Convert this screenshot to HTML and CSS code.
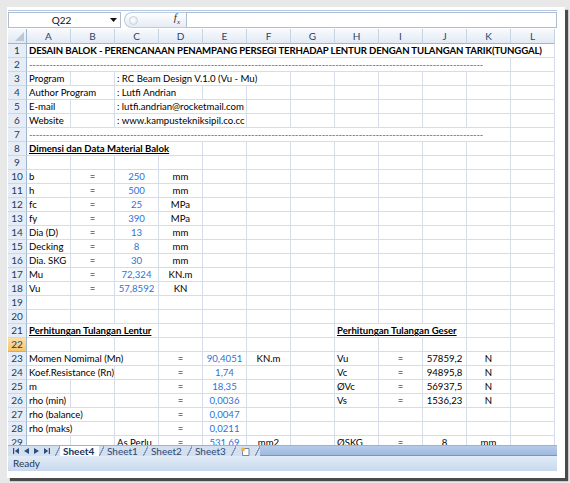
FILE: index.html
```html
<!DOCTYPE html>
<html>
<head>
<meta charset="utf-8">
<title>RC Beam Design</title>
<link rel="stylesheet" href="styles.css">
</head>
<body>
<div class="frame">
 <div class="excel">
  <div class="fbar">
   <div class="namebox"><span class="nb-text">Q22</span><svg class="nb-arrow" width="7" height="4" viewBox="0 0 7 4"><path d="M0 0h7L3.5 4z" fill="#111"/></svg></div>
   <div class="pill"><span class="grip"></span><span class="fx"><i>f</i><sub>x</sub></span></div>
   <div class="finput"></div>
  </div>
  <div class="gridwrap">
   <div class="grid">
    <div class="corner"><svg width="9" height="9" viewBox="0 0 9 9"><path d="M9 0V9H0z" fill="#b9c9dc"/></svg></div>
    <div class="ch">A</div><div class="ch">B</div><div class="ch">C</div><div class="ch">D</div><div class="ch">E</div><div class="ch">F</div><div class="ch">G</div><div class="ch">H</div><div class="ch">I</div><div class="ch">J</div><div class="ch">K</div><div class="ch">L</div>

    <div class="rh">1</div><div class="c s12 t">DESAIN BALOK - PERENCANAAN PENAMPANG PERSEGI TERHADAP LENTUR DENGAN TULANGAN TARIK(TUNGGAL)</div>

    <div class="rh">2</div><div class="c s11"><span class="dash">-----------------------------------------------------------------------------------------------------------------------------------------------------------------------------------------</span></div><div class="c"></div>

    <div class="rh">3</div><div class="c">Program</div><div class="c"></div><div class="c s4">: RC Beam Design V.1.0 (Vu - Mu)</div><div class="c"></div><div class="c"></div><div class="c"></div><div class="c"></div><div class="c"></div><div class="c"></div>

    <div class="rh">4</div><div class="c s2">Author Program</div><div class="c s2">: Lutfi Andrian</div><div class="c"></div><div class="c"></div><div class="c"></div><div class="c"></div><div class="c"></div><div class="c"></div><div class="c"></div><div class="c"></div>

    <div class="rh">5</div><div class="c">E-mail</div><div class="c"></div><div class="c s3">: lutfi.andrian@rocketmail.com</div><div class="c"></div><div class="c"></div><div class="c"></div><div class="c"></div><div class="c"></div><div class="c"></div><div class="c"></div>

    <div class="rh">6</div><div class="c">Website</div><div class="c"></div><div class="c s3">: www.kampustekniksipil.co.cc</div><div class="c"></div><div class="c"></div><div class="c"></div><div class="c"></div><div class="c"></div><div class="c"></div><div class="c"></div>

    <div class="rh">7</div><div class="c s11"><span class="dash">-----------------------------------------------------------------------------------------------------------------------------------------------------------------------------------------</span></div><div class="c"></div>

    <div class="rh">8</div><div class="c s4 h">Dimensi dan Data Material Balok</div><div class="c"></div><div class="c"></div><div class="c"></div><div class="c"></div><div class="c"></div><div class="c"></div><div class="c"></div><div class="c"></div>

    <div class="rh">9</div><div class="c"></div><div class="c"></div><div class="c"></div><div class="c"></div><div class="c"></div><div class="c"></div><div class="c"></div><div class="c"></div><div class="c"></div><div class="c"></div><div class="c"></div><div class="c"></div>

    <div class="rh">10</div><div class="c">b</div><div class="c ct">=</div><div class="c v">250</div><div class="c ct">mm</div><div class="c"></div><div class="c"></div><div class="c"></div><div class="c"></div><div class="c"></div><div class="c"></div><div class="c"></div><div class="c"></div>
    <div class="rh">11</div><div class="c">h</div><div class="c ct">=</div><div class="c v">500</div><div class="c ct">mm</div><div class="c"></div><div class="c"></div><div class="c"></div><div class="c"></div><div class="c"></div><div class="c"></div><div class="c"></div><div class="c"></div>
    <div class="rh">12</div><div class="c">fc</div><div class="c ct">=</div><div class="c v">25</div><div class="c ct">MPa</div><div class="c"></div><div class="c"></div><div class="c"></div><div class="c"></div><div class="c"></div><div class="c"></div><div class="c"></div><div class="c"></div>
    <div class="rh">13</div><div class="c">fy</div><div class="c ct">=</div><div class="c v">390</div><div class="c ct">MPa</div><div class="c"></div><div class="c"></div><div class="c"></div><div class="c"></div><div class="c"></div><div class="c"></div><div class="c"></div><div class="c"></div>
    <div class="rh">14</div><div class="c">Dia (D)</div><div class="c ct">=</div><div class="c v">13</div><div class="c ct">mm</div><div class="c"></div><div class="c"></div><div class="c"></div><div class="c"></div><div class="c"></div><div class="c"></div><div class="c"></div><div class="c"></div>
    <div class="rh">15</div><div class="c">Decking</div><div class="c ct">=</div><div class="c v">8</div><div class="c ct">mm</div><div class="c"></div><div class="c"></div><div class="c"></div><div class="c"></div><div class="c"></div><div class="c"></div><div class="c"></div><div class="c"></div>
    <div class="rh">16</div><div class="c">Dia. SKG</div><div class="c ct">=</div><div class="c v">30</div><div class="c ct">mm</div><div class="c"></div><div class="c"></div><div class="c"></div><div class="c"></div><div class="c"></div><div class="c"></div><div class="c"></div><div class="c"></div>
    <div class="rh">17</div><div class="c">Mu</div><div class="c ct">=</div><div class="c v">72,324</div><div class="c ct">KN.m</div><div class="c"></div><div class="c"></div><div class="c"></div><div class="c"></div><div class="c"></div><div class="c"></div><div class="c"></div><div class="c"></div>
    <div class="rh">18</div><div class="c">Vu</div><div class="c ct">=</div><div class="c v">57,8592</div><div class="c ct">KN</div><div class="c"></div><div class="c"></div><div class="c"></div><div class="c"></div><div class="c"></div><div class="c"></div><div class="c"></div><div class="c"></div>

    <div class="rh">19</div><div class="c"></div><div class="c"></div><div class="c"></div><div class="c"></div><div class="c"></div><div class="c"></div><div class="c"></div><div class="c"></div><div class="c"></div><div class="c"></div><div class="c"></div><div class="c"></div>
    <div class="rh">20</div><div class="c"></div><div class="c"></div><div class="c"></div><div class="c"></div><div class="c"></div><div class="c"></div><div class="c"></div><div class="c"></div><div class="c"></div><div class="c"></div><div class="c"></div><div class="c"></div>

    <div class="rh">21</div><div class="c s3 h">Perhitungan Tulangan Lentur</div><div class="c"></div><div class="c"></div><div class="c"></div><div class="c"></div><div class="c s3 h">Perhitungan Tulangan Geser</div><div class="c"></div><div class="c"></div>

    <div class="rh act">22</div><div class="c"></div><div class="c"></div><div class="c"></div><div class="c"></div><div class="c"></div><div class="c"></div><div class="c"></div><div class="c"></div><div class="c"></div><div class="c"></div><div class="c"></div><div class="c"></div>

    <div class="rh">23</div><div class="c s3">Momen Nomimal (Mn)</div><div class="c ct">=</div><div class="c v">90,4051</div><div class="c ct">KN.m</div><div class="c"></div><div class="c">Vu</div><div class="c ct">=</div><div class="c ct">57859,2</div><div class="c ct">N</div><div class="c"></div>
    <div class="rh">24</div><div class="c s2">Koef.Resistance (Rn)</div><div class="c"></div><div class="c ct">=</div><div class="c v">1,74</div><div class="c"></div><div class="c"></div><div class="c">Vc</div><div class="c ct">=</div><div class="c ct">94895,8</div><div class="c ct">N</div><div class="c"></div>
    <div class="rh">25</div><div class="c">m</div><div class="c"></div><div class="c"></div><div class="c ct">=</div><div class="c v">18,35</div><div class="c"></div><div class="c"></div><div class="c">ØVc</div><div class="c ct">=</div><div class="c ct">56937,5</div><div class="c ct">N</div><div class="c"></div>
    <div class="rh">26</div><div class="c">rho (min)</div><div class="c"></div><div class="c"></div><div class="c ct">=</div><div class="c v">0,0036</div><div class="c"></div><div class="c"></div><div class="c">Vs</div><div class="c ct">=</div><div class="c ct">1536,23</div><div class="c ct">N</div><div class="c"></div>
    <div class="rh">27</div><div class="c s2">rho (balance)</div><div class="c"></div><div class="c ct">=</div><div class="c v">0,0047</div><div class="c"></div><div class="c"></div><div class="c"></div><div class="c"></div><div class="c"></div><div class="c"></div><div class="c"></div>
    <div class="rh">28</div><div class="c s2">rho (maks)</div><div class="c"></div><div class="c ct">=</div><div class="c v">0,0211</div><div class="c"></div><div class="c"></div><div class="c"></div><div class="c"></div><div class="c"></div><div class="c"></div><div class="c"></div>
    <div class="rh">29</div><div class="c"></div><div class="c"></div><div class="c">As Perlu</div><div class="c ct">=</div><div class="c v">531,69</div><div class="c ct">mm2</div><div class="c"></div><div class="c">ØSKG</div><div class="c ct">=</div><div class="c ct">8</div><div class="c ct">mm</div><div class="c"></div>
   </div>
  </div>
  <div class="tabbar">
   <div class="nav">
    <svg width="6" height="6" viewBox="0 0 6 6"><path d="M0 0h1.2v6H0zM6 0v6L1.8 3z" fill="#2d4f7c"/></svg>
    <svg width="5" height="6" viewBox="0 0 5 6"><path d="M5 0v6L0 3z" fill="#2d4f7c"/></svg>
    <svg width="5" height="6" viewBox="0 0 5 6"><path d="M0 0v6l5-3z" fill="#2d4f7c"/></svg>
    <svg width="6" height="6" viewBox="0 0 6 6"><path d="M0 0v6l4.2-3zM4.8 0H6v6H4.8z" fill="#2d4f7c"/></svg>
   </div>
   <div class="sep"></div>
   <div class="tab active">Sheet4</div>
   <div class="sep"></div>
   <div class="tab">Sheet1</div>
   <div class="sep"></div>
   <div class="tab">Sheet2</div>
   <div class="sep"></div>
   <div class="tab">Sheet3</div>
   <div class="sep"></div>
   <div class="newsheet"><svg width="11" height="9" viewBox="0 0 11 9"><path d="M2.5 1.5h6.5v7H2.5z" fill="#fff" stroke="#6f86a8" stroke-width="1"/><circle cx="3" cy="2.5" r="2" fill="#f0b347"/></svg></div>
   <div class="sep"></div>
   <div class="hbar"></div>
  </div>
  <div class="status">Ready</div>
 </div>
</div>
</body>
</html>
```
FILE: styles.css
```css
* { box-sizing: border-box; }
html, body { margin: 0; padding: 0; }
body {
  background: #e8e8e8;
  width: 570px;
  height: 483px;
  overflow: hidden;
  font-family: Lato, "Liberation Sans", sans-serif;
}
.frame {
  margin: 7px 0 0 7px;
  width: 558px;
  height: 471px;
  background: #fff;
  padding: 2px 0 0 1px;
  box-shadow: 3px 3px 1px #4a4a4a;
}
.excel {
  width: 549px;
  display: flex;
  flex-direction: column;
}

/* formula bar */
.fbar {
  height: 20px;
  display: flex;
  align-items: flex-start;
  padding-top: 3px;
  background: linear-gradient(#fff 0 1px, #b3c8e5 1px 2px, #fff 2px);
}
.namebox {
  width: 113px;
  height: 16px;
  border: 1px solid #aebdd2;
  display: flex;
  align-items: center;
  background: #fff;
}
.nb-text {
  flex: 1;
  text-align: center;
  font-size: 10px;
  color: #111;
  padding-left: 4px;
}
.nb-arrow { margin-right: 3px; }
.pill {
  margin-left: 3px;
  width: 62px;
  height: 16px;
  border: 1px solid #bccadc;
  border-right: none;
  border-radius: 8px 0 0 8px;
  background: linear-gradient(#fdfeff, #e6ecf4);
  display: flex;
  align-items: center;
}
.grip {
  width: 9px;
  height: 9px;
  margin-left: 4px;
  border-radius: 50%;
  border: 1px solid #c7d2df;
  background: radial-gradient(circle at 40% 40%, #fff, #dde4ee);
}
.fx {
  margin-left: auto;
  margin-right: 6px;
  font-family: "Liberation Serif", serif;
  font-size: 11px;
  color: #333;
  line-height: 10px;
}
.fx sub { font-size: 7px; font-style: italic; }
.finput {
  flex: 1;
  height: 16px;
  border: 1px solid #aebdd2;
  background: #fff;
}

/* grid */
.gridwrap {
  height: 416px;
  overflow: hidden;
}
.grid {
  display: grid;
  grid-template-columns: 19px repeat(12, 44px);
  grid-template-rows: 15px;
  grid-auto-rows: 14px;
  background: #fff;
}
.corner {
  background: linear-gradient(#f5f8fc, #e2e9f3);
  border-right: 1px solid #9eb6ce;
  border-bottom: 1px solid #9eb6ce;
  display: flex;
  align-items: flex-end;
  justify-content: flex-end;
  padding: 0 2px 2px 0;
}
.ch {
  background: linear-gradient(#f8fafd, #e3eaf4);
  border-right: 1px solid #c6d3e3;
  border-bottom: 1px solid #9eb6ce;
  text-align: center;
  font-size: 10px;
  line-height: 14px;
  color: #2a4466;
}
.rh {
  background: #e6edf7;
  border-right: 1px solid #9eb6ce;
  border-bottom: 1px solid #cdd8e6;
  text-align: center;
  font-size: 10px;
  line-height: 13px;
  color: #213b5e;
}
.rh.act {
  background: linear-gradient(#fbdfa8, #f5c46a);
  border-bottom-color: #e0a94e;
}
.c {
  border-right: 1px solid #d7dce9;
  border-bottom: 1px solid #d7dce9;
  padding: 0 2px;
  font-size: 9.6px;
  line-height: 14px;
  white-space: nowrap;
  overflow: hidden;
  color: #000;
}
.s2 { grid-column: span 2; }
.s3 { grid-column: span 3; }
.s4 { grid-column: span 4; }
.s11 { grid-column: span 11; }
.s12 { grid-column: span 12; }
.ct { text-align: center; }
.v { text-align: center; color: #2f72d6; }
.t { font-weight: bold; letter-spacing: -0.12px; }
.h { font-weight: bold; text-decoration: underline; }
.dash {
  display: block;
  width: 454px;
  overflow: hidden;
  color: #666;
  letter-spacing: -0.2px;
}

/* sheet tabs */
.tabbar {
  height: 11px;
  display: flex;
  align-items: stretch;
  background: #d4e0f0;
  border-top: 1px solid #9cb2cf;
}
.nav {
  width: 47px;
  display: flex;
  align-items: center;
  gap: 5px;
  padding-left: 5px;
}
.sep {
  width: 5px;
  background: linear-gradient(to bottom right, transparent 44%, #8299bb 44% 58%, transparent 58%);
}
.tab {
  width: 39px;
  padding-left: 3px;
  font-size: 10px;
  line-height: 10px;
  color: #2a4a78;
  white-space: nowrap;
}
.tab.active {
  background: #fff;
  font-weight: bold;
  color: #17335c;
}
.newsheet {
  width: 19px;
  display: flex;
  align-items: center;
  justify-content: center;
}
.hbar {
  flex: 1;
  background: linear-gradient(#b5cbea, #9fb9df);
  border-bottom: 1px solid #7996c2;
}

/* status bar */
.status {
  height: 15px;
  padding-left: 5px;
  font-size: 10px;
  line-height: 15px;
  color: #1d3557;
  background: linear-gradient(#e2ebf7, #c8d9ef);
}
```
